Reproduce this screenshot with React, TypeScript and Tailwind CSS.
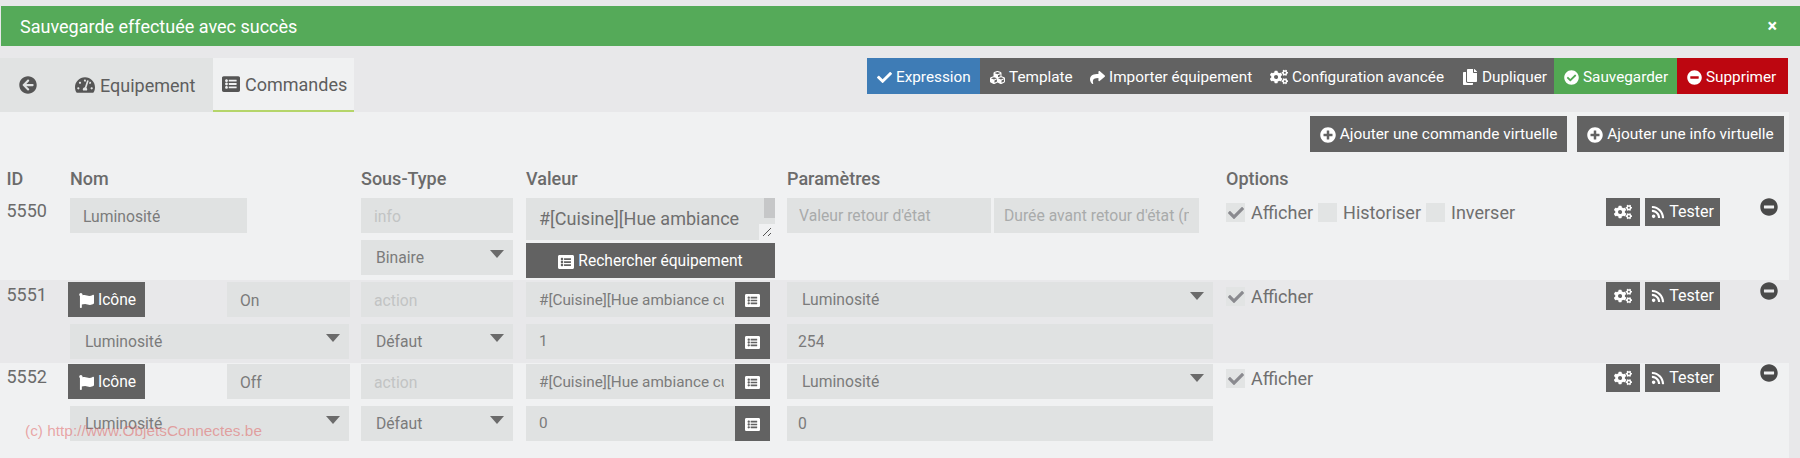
import React from 'react';
import {
  FaArrowCircleLeft,
  FaTachometerAlt,
  FaListAlt,
  FaCheck,
  FaCubes,
  FaShare,
  FaCogs,
  FaCopy,
  FaCheckCircle,
  FaMinusCircle,
  FaPlusCircle,
  FaFlag,
  FaRss,
} from 'react-icons/fa';

const field = 'h-[35px] bg-[#e0e2e2] text-[#7b7b7b] text-[15.7px] flex items-center overflow-hidden whitespace-nowrap';
const darkBtn = 'h-[35px] pt-[2px] bg-[#626262] text-white text-[15.6px] flex items-center justify-center gap-1';
const rowGrid = 'grid grid-cols-[70px_291px_165px_261px_439px_380px_154px_29px]';

const Input = ({ value, muted, className = '' }: { value: string; muted?: boolean; className?: string }) => (
  <div className={`${field} px-[13px] ${muted ? 'text-[#c2c4c4]' : ''} ${className}`}>
    <span className="block overflow-hidden">{value}</span>
  </div>
);

const Select = ({ value, className = '' }: { value: string; className?: string }) => (
  <div className={`${field} pl-[15px] pr-[9px] justify-between items-start ${className}`}>
    <span className="leading-[35px]">{value}</span>
    <svg width="14" height="8" viewBox="0 0 14 8" className="mt-[10px] shrink-0">
      <path d="M0 0h14L7 8z" fill="#6b6b6b" />
    </svg>
  </div>
);

const Check = ({ checked, label }: { checked?: boolean; label: string }) => (
  <div className="flex items-center gap-[6px]">
    <span className="w-[19px] h-[19px] bg-[#e2e4e4] flex items-center justify-center">
      {checked && <FaCheck className="text-[#8a8a8f] text-[16px]" />}
    </span>
    <span className="text-[18px] text-[#6f6f6f]">{label}</span>
  </div>
);

const ListField = ({ value, className = '' }: { value: string; className?: string }) => (
  <div className="flex w-[244px]">
    <div className={`${field} w-[209px] pl-[13px] pr-[11px] !text-[15.3px] ${className}`}>
      <span className="block overflow-hidden">{value}</span>
    </div>
    <button className={`${darkBtn} w-[35px]`}>
      <FaListAlt className="text-[15px]" />
    </button>
  </div>
);

const RowActions = () => (
  <>
    <div className="flex gap-[5px]">
      <button className="h-[28px] w-[34px] bg-[#626262] text-white flex items-center justify-center">
        <FaCogs className="text-[18px]" />
      </button>
      <button className="h-[28px] w-[75px] bg-[#626262] text-white text-[16px] flex items-center justify-center gap-[4px]">
        <FaRss className="text-[14px]" />
        Tester
      </button>
    </div>
    <div>
      <FaMinusCircle className="text-[18px] text-[#4a4a4a]" />
    </div>
  </>
);

const ActionRow = ({ id, name, value, param, last, className }: { id: number; name: string; value: string; param: string; last: string; className: string }) => (
  <div className={`${rowGrid} h-[83px] ${className}`}>
    <div className="pl-[6.5px] text-[18px] text-[#6b6b6b] leading-[25px]">{id}</div>
    <div className="flex flex-col gap-[7px]">
      <div className="flex justify-between w-[282px] -ml-[2px]">
        <button className={`${darkBtn} w-[77px] pl-[2px]`}>
          <FaFlag className="text-[15px]" />
          Icône
        </button>
        <Input value={name} className="w-[123px] pt-[2px]" />
      </div>
      <Select value="Luminosité" className="w-[279px]" />
    </div>
    <div className="flex flex-col gap-[7px]">
      <Input value="action" muted className="w-[152px] pt-[2px]" />
      <Select value="Défaut" className="w-[152px]" />
    </div>
    <div className="flex flex-col gap-[7px]">
      <ListField value={value} className="pt-[2px]" />
      <ListField value={last} />
    </div>
    <div className="flex flex-col gap-[7px]">
      <Select value="Luminosité" className="w-[426px]" />
      <Input value={param} className="w-[426px] !px-[11px]" />
    </div>
    <div className="pt-[1px]">
      <Check checked label="Afficher" />
    </div>
    <RowActions />
  </div>
);

const toolbar = [
  { label: 'Expression', icon: <FaCheck className="text-[15px]" />, bg: 'bg-[#3e7cb6]', w: 'w-[113px]' },
  { label: 'Template', icon: <FaCubes className="text-[15px]" />, bg: 'bg-[#626262]', w: 'w-[100px]' },
  { label: 'Importer équipement', icon: <FaShare className="text-[15px]" />, bg: 'bg-[#626262]', w: 'w-[180px]' },
  { label: 'Configuration avancée', icon: <FaCogs className="text-[18px]" />, bg: 'bg-[#626262]', w: 'w-[192px]' },
  { label: 'Dupliquer', icon: <FaCopy className="text-[16px]" />, bg: 'bg-[#626262]', w: 'w-[102px]' },
  { label: 'Sauvegarder', icon: <FaCheckCircle className="text-[15px]" />, bg: 'bg-[#52a853]', w: 'w-[123px]' },
  { label: 'Supprimer', icon: <FaMinusCircle className="text-[15px]" />, bg: 'bg-[#bd0610]', w: 'w-[111px]' },
];

export default function App() {
  return (
    <div className="relative w-[1800px] h-[458px] overflow-hidden bg-[#e8e8ea] pt-[6px] font-['Roboto',sans-serif]">
      <div className="ml-[1px] h-[40px] bg-[#55aa59] text-white text-[18px] flex items-center justify-between pl-[19px] pr-[23px]">
        <span>Sauvegarde effectuée avec succès</span>
        <span className="text-[18px] font-bold leading-none">×</span>
      </div>

      <div className="mt-[12px] h-[54px] flex justify-between pr-[12px]">
        <div className="flex">
          <div className="w-[213px] bg-[#e1e3e3] flex items-center text-[#5e5e5e] text-[18px]">
            <FaArrowCircleLeft className="ml-[19px] text-[18px] text-[#555]" />
            <FaTachometerAlt className="ml-[38px] mr-[5px] text-[20px] text-[#555]" />
            Equipement
          </div>
          <div className="w-[141px] bg-[#f0f1f2] border-b-2 border-[#b5d56a] flex items-center pl-[9px] gap-[5px] text-[#5e5e5e] text-[18px]">
            <FaListAlt className="text-[18px] text-[#555]" />
            Commandes
          </div>
        </div>
        <div className="flex h-[36px] text-white text-[15.3px]">
          {toolbar.map((b) => (
            <button key={b.label} className={`${b.w} ${b.bg} flex items-center pl-[10px] pt-[2px] gap-[4px] whitespace-nowrap`}>
              {b.icon}
              {b.label}
            </button>
          ))}
        </div>
      </div>

      <div className="w-[1789px] h-[346px] bg-[#f0f1f2]">
        <div className="flex justify-end gap-[10px] pt-[4px] pr-[5px]">
          <button className="w-[257px] h-[36px] pt-[2px] bg-[#626262] text-white text-[15.4px] flex items-center justify-center gap-[4px]">
            <FaPlusCircle className="text-[16px]" />
            Ajouter une commande virtuelle
          </button>
          <button className="w-[207px] h-[36px] pt-[2px] bg-[#626262] text-white text-[15.4px] flex items-center justify-center gap-[4px]">
            <FaPlusCircle className="text-[16px]" />
            Ajouter une info virtuelle
          </button>
        </div>

        <div className={`${rowGrid} h-[44px] items-center pt-[8px] text-[18px] font-medium text-[#6b6b6b]`}>
          <div className="pl-[6.5px]">ID</div>
          <div>Nom</div>
          <div>Sous-Type</div>
          <div>Valeur</div>
          <div>Paramètres</div>
          <div>Options</div>
        </div>

        <div className={`${rowGrid} h-[84px] pt-[2px]`}>
          <div className="pl-[6.5px] text-[18px] text-[#6b6b6b] leading-[25px]">5550</div>
          <div>
            <Input value="Luminosité" className="w-[177px] pt-[2px]" />
          </div>
          <div className="flex flex-col gap-[7px]">
            <Input value="info" muted className="w-[152px] pt-[2px]" />
            <Select value="Binaire" className="w-[152px]" />
          </div>
          <div className="w-[249px]">
            <div className="relative h-[42px] bg-[#e0e2e2] text-[#6f6f6f] text-[18px] leading-[31px] pl-[13px] pr-[22px] pt-[4.5px] overflow-hidden">
              #[Cuisine][Hue ambiance cuisine][Luminosité]#
              <span className="absolute top-0 right-0 w-[11px] h-[20px] bg-[#c6c7c8]" />
              <span className="absolute bottom-0 right-0 w-[16px] h-[16px] bg-[#f0f1f2] flex items-center justify-center">
                <svg width="10" height="10" viewBox="0 0 10 10">
                  <path d="M1 9 9 1M6 9 9 6" stroke="#555" strokeWidth="1" fill="none" />
                </svg>
              </span>
            </div>
            <button className={`${darkBtn} w-full mt-[3px]`}>
              <FaListAlt className="text-[16px]" />
              Rechercher équipement
            </button>
          </div>
          <div className="flex gap-[3px]">
            <Input value="Valeur retour d'état" muted className="w-[204px] !text-[#a9abab] !pl-[12px]" />
            <Input value="Durée avant retour d'état (min)" muted className="w-[205px] !text-[#a9abab] !pl-[10px] !pr-[10px]" />
          </div>
          <div className="flex gap-[5px] pt-[1px] h-fit">
            <Check checked label="Afficher" />
            <Check label="Historiser" />
            <Check label="Inverser" />
          </div>
          <RowActions />
        </div>

        <ActionRow id={5551} name="On" value="#[Cuisine][Hue ambiance cuisine][Luminosité]#" last="1" param="254" className="pt-[2px] bg-[#e8e8ea]" />
        <ActionRow id={5552} name="Off" value="#[Cuisine][Hue ambiance cuisine][Luminosité]#" last="0" param="0" className="pt-[1px]" />
      </div>

      <div className="absolute left-[25px] top-[419px] text-[15.4px] text-[#e05a5a]/50 font-['Liberation_Sans',sans-serif] pointer-events-none">
        (c) http://www.ObjetsConnectes.be
      </div>
    </div>
  );
}
